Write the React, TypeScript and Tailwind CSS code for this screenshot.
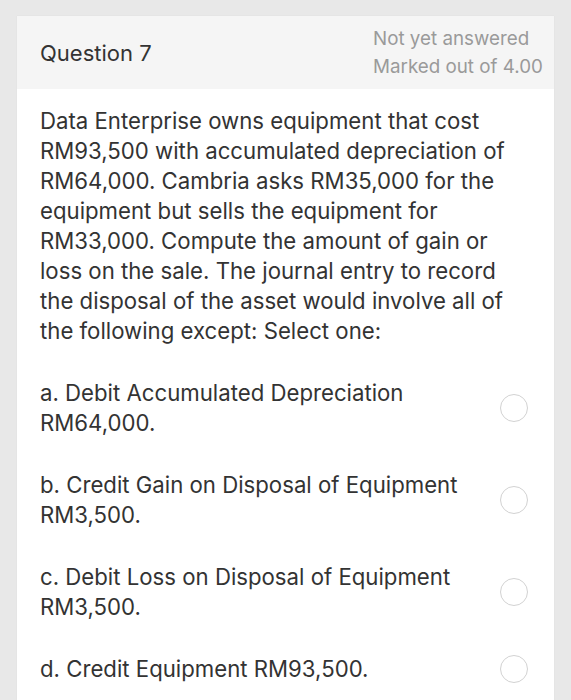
import React from 'react';

const options = [
  ['a. Debit Accumulated Depreciation', 'RM64,000.'],
  ['b. Credit Gain on Disposal of Equipment', 'RM3,500.'],
  ['c. Debit Loss on Disposal of Equipment', 'RM3,500.'],
  ['d. Credit Equipment RM93,500.'],
];

const Radio = () => (
  <span className="w-[28px] h-[28px] rounded-full border-[1.5px] border-[#d2d2d2] bg-white shrink-0" />
);

export default function App() {
  return (
    <div className="h-[700px] overflow-hidden bg-[#e8e8e8] pt-4 pl-[17px] pr-[17px]" style={{ fontFamily: 'Inter, "Liberation Sans", Arial, sans-serif' }}>
      <div className="bg-white min-h-[700px] shadow-[0_0_1px_rgba(0,0,0,0.08)]">
        {/* header */}
        <div className="bg-[#f5f5f5] h-[73px] flex items-center justify-between pl-[23px] pr-[8px]">
          <div className="text-[22px] text-[#333] mt-[1px]">Question 7</div>
          <div className="text-[18.8px] leading-[28px] text-[#9a9a9a] w-[173px]">
            <div>Not yet answered</div>
            <div>Marked out of 4.00</div>
          </div>
        </div>

        {/* body */}
        <div className="pl-[23px] pr-[20px] pt-[17px] text-[#333]">
          <p className="text-[22.2px] leading-[30px] max-w-[478px]">
            Data Enterprise owns equipment that cost RM93,500 with accumulated depreciation of RM64,000. Cambria asks RM35,000 for the equipment but sells the equipment for RM33,000. Compute the amount of gain or loss on the sale. The journal entry to record the disposal of the asset would involve all of the following except: Select one:
          </p>

          <div className="mt-[32px] flex flex-col gap-[32px] pr-[6px]">
            {options.map((lines, i) => (
              <div key={i} className="flex items-center justify-between gap-4">
                <div className="text-[22.2px] leading-[30px]">
                  {lines.map((l, j) => (
                    <div key={j}>{l}</div>
                  ))}
                </div>
                <Radio />
              </div>
            ))}
          </div>
        </div>
      </div>
    </div>
  );
}
